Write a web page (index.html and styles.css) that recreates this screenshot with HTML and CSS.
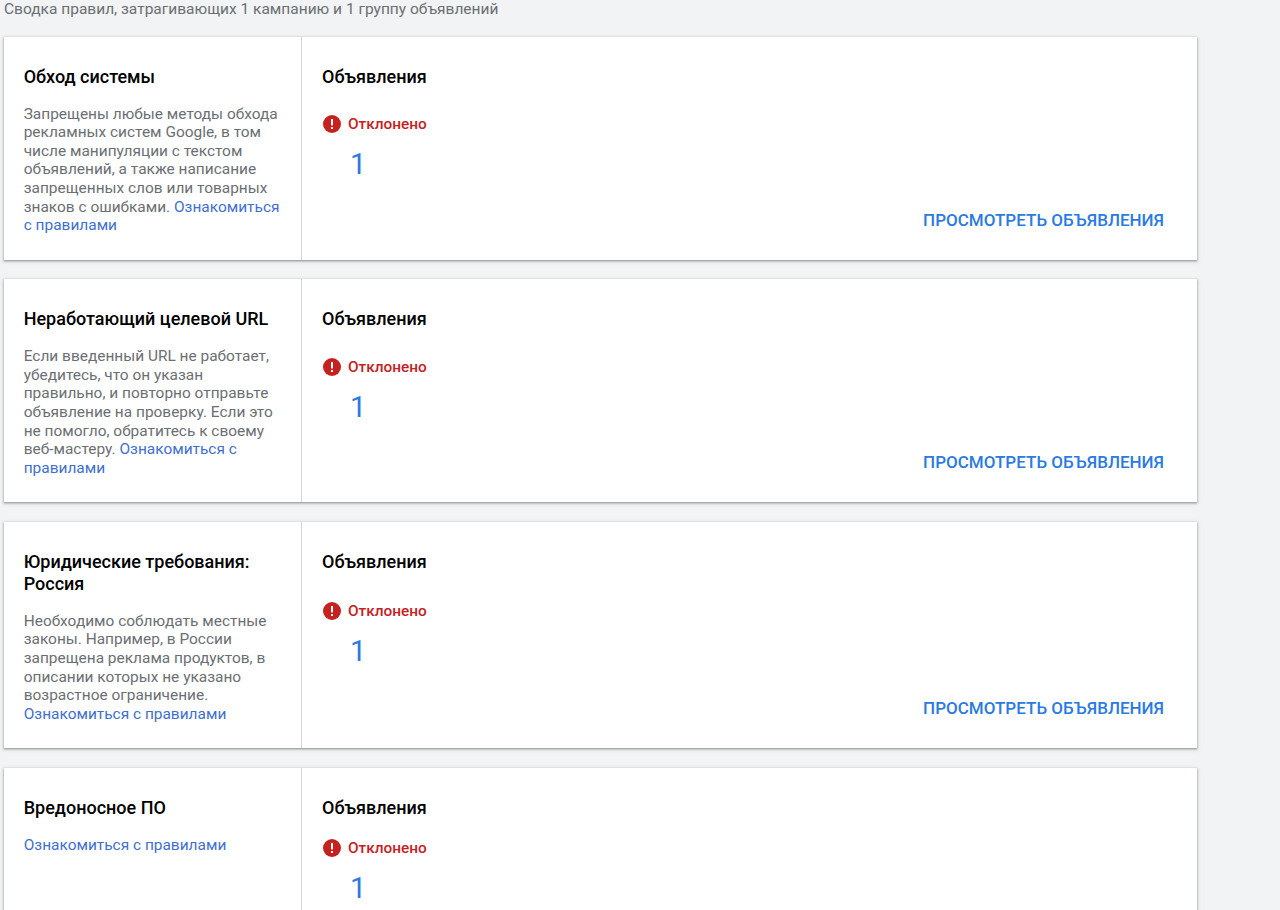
FILE: index.html
```html
<!DOCTYPE html>
<html lang="ru">
<head>
<meta charset="utf-8">
<title>Сводка правил</title>
<link rel="stylesheet" href="styles.css">
</head>
<body>
<svg class="sprite" width="0" height="0"><symbol id="err" viewBox="0 0 18 18"><circle cx="9" cy="9" r="9" fill="#c5221f"/><rect x="8" y="4" width="2" height="6.4" fill="#fff"/><rect x="8" y="12" width="2" height="2" fill="#fff"/></symbol></svg>
<div class="summary">Сводка правил, затрагивающих 1 кампанию и 1 группу объявлений</div>

<section class="card">
  <div class="info">
    <h2 class="title">Обход системы</h2>
    <p class="desc">Запрещены любые методы обхода рекламных систем Google, в том числе манипуляции с текстом объявлений, а также написание запрещенных слов или товарных знаков с ошибками. <a class="link">Ознакомиться с правилами</a></p>
  </div>
  <div class="stats">
    <h3 class="title">Объявления</h3>
    <div class="metric">
      <div class="status"><svg class="icon"><use href="#err"/></svg><span>Отклонено</span></div>
      <div class="count">1</div>
    </div>
    <a class="action">Просмотреть объявления</a>
  </div>
</section>

<section class="card">
  <div class="info">
    <h2 class="title">Неработающий целевой URL</h2>
    <p class="desc">Если введенный URL не работает, убедитесь, что он указан правильно, и повторно отправьте объявление на проверку. Если это не помогло, обратитесь к своему веб-мастеру. <a class="link">Ознакомиться с правилами</a></p>
  </div>
  <div class="stats">
    <h3 class="title">Объявления</h3>
    <div class="metric">
      <div class="status"><svg class="icon"><use href="#err"/></svg><span>Отклонено</span></div>
      <div class="count">1</div>
    </div>
    <a class="action">Просмотреть объявления</a>
  </div>
</section>

<section class="card">
  <div class="info">
    <h2 class="title">Юридические требования: Россия</h2>
    <p class="desc">Необходимо соблюдать местные законы. Например, в России запрещена реклама продуктов, в описании которых не указано возрастное ограничение. <a class="link">Ознакомиться с правилами</a></p>
  </div>
  <div class="stats">
    <h3 class="title">Объявления</h3>
    <div class="metric">
      <div class="status"><svg class="icon"><use href="#err"/></svg><span>Отклонено</span></div>
      <div class="count">1</div>
    </div>
    <a class="action">Просмотреть объявления</a>
  </div>
</section>

<section class="card">
  <div class="info">
    <h2 class="title">Вредоносное ПО</h2>
    <p class="desc"><a class="link">Ознакомиться с правилами</a></p>
  </div>
  <div class="stats">
    <h3 class="title">Объявления</h3>
    <div class="metric">
      <div class="status"><svg class="icon"><use href="#err"/></svg><span>Отклонено</span></div>
      <div class="count">1</div>
    </div>
    <a class="action">Просмотреть объявления</a>
  </div>
</section>
</body>
</html>
```
FILE: styles.css
```css
html, body {
  margin: 0;
  height: 910px;
  overflow: hidden;
}
body {
  background: #f1f3f4;
  font-family: Roboto, "Noto Sans", sans-serif;
  color: #000;
  padding-left: 4px;
  box-sizing: border-box;
}
.sprite { position: absolute; }
.summary {
  font-size: 15.5px;
  line-height: 18px;
  color: #6b6f73;
  margin-bottom: 18.7px;
}
.card {
  width: 1193px;
  display: flex;
  background: #fff;
  box-shadow: 0 1px 2px rgba(60,64,67,.45), 0 1px 3px 1px rgba(60,64,67,.15);
  margin-bottom: 19.4px;
}
.info {
  width: 298px;
  box-sizing: border-box;
  flex: none;
  padding: 29px 20px 25px 19.7px;
  border-right: 1px solid #d3d5d8;
}
.title {
  margin: 0;
  font-size: 18px;
  line-height: 22px;
  font-weight: 500;
}
.desc {
  margin: 17px 0 0;
  font-size: 15.45px;
  line-height: 18.6px;
  color: #6b6f73;
}
.link { color: #3f6fd0; }
.stats {
  flex: 1;
  display: flex;
  flex-direction: column;
  padding: 29px 33px 29px 20px;
}
.metric {
  margin: auto 0;
  padding: 19px 0;
}
.status {
  display: flex;
  align-items: center;
  gap: 7px;
  margin-left: 1px;
  font-size: 15.4px;
  line-height: 20px;
  font-weight: 500;
  color: #c5221f;
}
.icon { width: 18px; height: 18px; flex: none; }
.count {
  margin-left: 28px;
  margin-top: 12px;
  font-size: 29px;
  line-height: 36px;
  color: #2a7ae2;
}
.action {
  align-self: flex-end;
  font-size: 17px;
  line-height: 22px;
  font-weight: 500;
  text-transform: uppercase;
  color: #2a7ae2;
}
```
